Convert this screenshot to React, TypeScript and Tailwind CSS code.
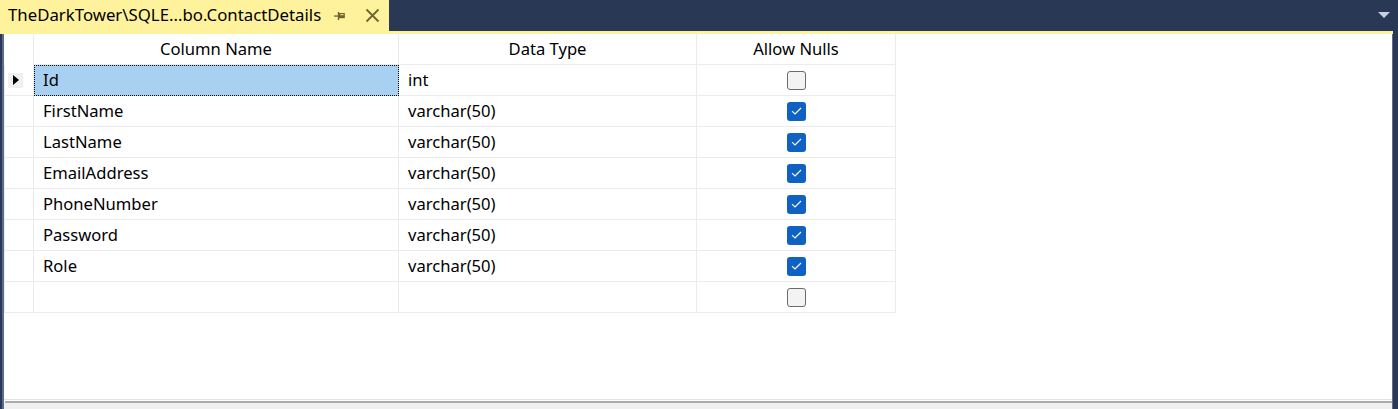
import { Fragment } from "react";

type Row = { name: string; type: string; nulls: boolean };

const rows: Row[] = [
  { name: "Id", type: "int", nulls: false },
  { name: "FirstName", type: "varchar(50)", nulls: true },
  { name: "LastName", type: "varchar(50)", nulls: true },
  { name: "EmailAddress", type: "varchar(50)", nulls: true },
  { name: "PhoneNumber", type: "varchar(50)", nulls: true },
  { name: "Password", type: "varchar(50)", nulls: true },
  { name: "Role", type: "varchar(50)", nulls: true },
];

function Check({ on }: { on: boolean }) {
  if (!on)
    return <div className="h-[19px] w-[19px] rounded-[3px] border border-[#6b6b6b] bg-[#f3f3f3]" />;
  return (
    <div className="flex h-[19px] w-[19px] items-center justify-center rounded-[3px] bg-[#0f62c4]">
      <svg width="11" height="8" viewBox="0 0 11 8" fill="none">
        <path d="M1 4.2 L4 7 L10 1" stroke="#fff" strokeWidth="1.1" />
      </svg>
    </div>
  );
}

export default function App() {
  const cell = "h-[31px] border-b border-r border-[#ebebeb] flex items-center";
  return (
    <div
      className="flex h-[409px] w-[1398px] flex-col bg-[#293955] text-[16.6px] text-black"
      style={{ fontFamily: '"Noto Sans", "Segoe UI", sans-serif' }}
    >
      {/* tab strip */}
      <div className="flex h-[31px] shrink-0">
        <div className="flex w-[389px] items-center bg-[#fff29d] pl-[8px]">
          <span className="text-[16.8px] leading-none">TheDarkTower\SQLE...bo.ContactDetails</span>
          <svg className="ml-auto" width="12" height="10" viewBox="0 0 12 10" fill="#6f6436">
            <rect x="0" y="4.4" width="4" height="1.3" />
            <rect x="3.8" y="1" width="1.4" height="8" />
            <rect x="5.6" y="2.6" width="4.6" height="4" fill="none" stroke="#6f6436" strokeWidth="1.2" />
            <rect x="5.6" y="4.2" width="4.6" height="2.4" />
          </svg>
          <svg className="ml-[19px] mr-[9px]" width="15" height="15" viewBox="0 0 15 15">
            <path d="M1.5 1.5 L13.5 13.5 M13.5 1.5 L1.5 13.5" stroke="#6f6436" strokeWidth="1.8" />
          </svg>
        </div>
        <div className="flex flex-1 items-center justify-end pr-[8px]">
          <svg width="12" height="7" viewBox="0 0 12 7">
            <path d="M0 0 H12 L6 6 Z" fill="#c9d0de" />
          </svg>
        </div>
      </div>
      <div className="mr-[5px] h-[3px] shrink-0 bg-[#fff29d]" />

      {/* document body */}
      <div className="flex flex-1">
        <div className="w-[2px] bg-[#293955]" />
        <div className="w-[2px] bg-[#5b6a8e]" />
        <div className="flex flex-1 flex-col bg-white">
          <div className="flex-1">
            <div className="grid grid-cols-[30px_365px_298px_199px]">
              <div className="h-[31px] border-r border-[#ebebeb]" />
              <div className={cell + " justify-center"}>Column Name</div>
              <div className={cell + " justify-center"}>Data Type</div>
              <div className={cell + " justify-center"}>Allow Nulls</div>

              {rows.map((r, i) => (
                <Fragment key={r.name}>
                  <div className={cell + " border-l"}>
                    {i === 0 && (
                      <div className="ml-[3px] flex h-[15px] w-[15px] items-center justify-center bg-[#f0f0f0]">
                        <svg width="6" height="10" viewBox="0 0 6 10">
                          <path d="M0 0 L6 5 L0 10 Z" fill="#000" />
                        </svg>
                      </div>
                    )}
                  </div>
                  <div
                    className={
                      i === 0
                        ? "flex h-[31px] items-center border border-dotted border-black bg-[#a7d0f1] pl-[8px]"
                        : cell + " pl-[9px]"
                    }
                  >
                    {r.name}
                  </div>
                  <div className={cell + " pl-[9px]"}>{r.type}</div>
                  <div className={cell + " justify-center"}>
                    <Check on={r.nulls} />
                  </div>
                </Fragment>
              ))}

              <div className={cell + " border-l"} />
              <div className={cell} />
              <div className={cell} />
              <div className={cell + " justify-center"}>
                <Check on={false} />
              </div>
            </div>
          </div>
          {/* horizontal scroll strip */}
          <div className="h-px bg-[#e2e2e2]" />
          <div className="h-px bg-white" />
          <div className="ml-[1px] h-[2px] bg-[#ababab]" />
          <div className="h-[6px] bg-[#f0f0f0]" />
        </div>
        <div className="w-px bg-[#5b6a8e]" />
        <div className="w-[5px] bg-[#293955]" />
      </div>
    </div>
  );
}
